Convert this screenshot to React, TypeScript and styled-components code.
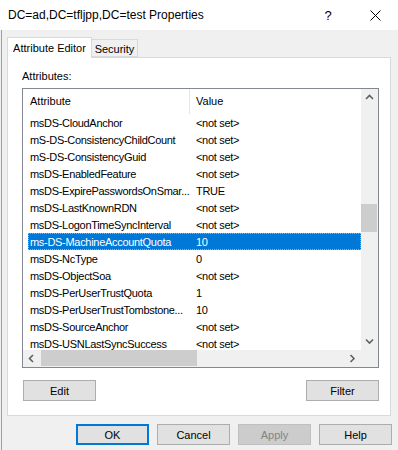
import styled, { createGlobalStyle } from "styled-components";

const GlobalStyle = createGlobalStyle`
  html, body {
    margin: 0;
    padding: 0;
    background: #f0f0f0;
  }
  * {
    box-sizing: border-box;
  }
`;

const Window = styled.div`
  width: 398px;
  height: 450px;
  display: flex;
  flex-direction: column;
  background: #f0f0f0;
  font-family: "Liberation Sans", Arial, sans-serif;
  font-size: 11px;
  color: #000;
  overflow: hidden;
`;

const TitleBar = styled.div`
  height: 30px;
  flex: none;
  display: flex;
  align-items: center;
  background: #fff;
  padding-left: 8px;
`;

const Title = styled.span`
  font-size: 12px;
  flex: 1;
`;

const HelpGlyph = styled.span`
  width: 44px;
  text-align: center;
  font-size: 13px;
  margin-right: 2px;
`;

const CloseButton = styled.span`
  width: 46px;
  height: 30px;
  display: flex;
  align-items: center;
  justify-content: center;
`;

const Body = styled.div`
  flex: 1;
  margin-left: 1px;
  border-left: 1px solid #a0a0a0;
  padding: 7px 7px 0 5px;
  display: flex;
  flex-direction: column;
`;

const TabStrip = styled.div`
  display: flex;
  align-items: flex-end;
  height: 20px;
  position: relative;
  z-index: 1;
`;

const Tab = styled.div<{ $active?: boolean }>`
  height: ${(p) => (p.$active ? "21px" : "18px")};
  width: ${(p) => (p.$active ? "85px" : "46px")};
  margin-bottom: ${(p) => (p.$active ? "-1px" : "0")};
  background: ${(p) => (p.$active ? "#fff" : "#f0f0f0")};
  border: 1px solid #d9d9d9;
  border-bottom: ${(p) => (p.$active ? "none" : "1px solid #d9d9d9")};
  border-left: ${(p) => (p.$active ? "1px solid #d9d9d9" : "none")};
  display: flex;
  align-items: center;
  justify-content: center;
  padding-top: ${(p) => (p.$active ? "0" : "1px")};
  padding-bottom: ${(p) => (p.$active ? "1px" : "0")};
`;

const Panel = styled.div`
  width: 384px;
  height: 359px;
  background: #fff;
  border: 1px solid #d9d9d9;
  padding: 12px 11px 0 14px;
  display: flex;
  flex-direction: column;
`;

const Label = styled.div`
  height: 13px;
  line-height: 13px;
  margin-bottom: 5px;
`;

const ListBox = styled.div`
  width: 357px;
  height: 280px;
  border: 1px solid #828790;
  display: grid;
  grid-template-columns: 338px 17px;
  grid-template-rows: 261px 17px;
`;

const ListContent = styled.div`
  overflow: hidden;
  background: #fff;
`;

const HeaderRow = styled.div`
  height: 25px;
  display: flex;
  padding-left: 5px;
`;

const HeaderCell = styled.div<{ $first?: boolean }>`
  width: ${(p) => (p.$first ? "162px" : "auto")};
  padding-left: ${(p) => (p.$first ? "2px" : "6px")};
  border-right: ${(p) => (p.$first ? "1px solid #e5e5e5" : "none")};
  display: flex;
  align-items: center;
  padding-bottom: 1px;
`;

const Row = styled.div<{ $selected?: boolean }>`
  height: 17px;
  margin-left: 5px;
  display: grid;
  grid-template-columns: 162px 1fr;
  align-items: center;
  background: ${(p) => (p.$selected ? "#0078d7" : "transparent")};
  color: ${(p) => (p.$selected ? "#fff" : "#000")};
  border: 1px dotted ${(p) => (p.$selected ? "#f5a040" : "transparent")};
`;

const Cell = styled.span<{ $value?: boolean }>`
  padding-left: ${(p) => (p.$value ? "5px" : "1px")};
  white-space: nowrap;
  overflow: hidden;
  letter-spacing: -0.3px;
`;

const VScroll = styled.div`
  background: #f0f0f0;
  display: flex;
  flex-direction: column;
`;

const HScroll = styled.div`
  background: #f0f0f0;
  display: flex;
  align-items: stretch;
`;

const ArrowButton = styled.div`
  width: 17px;
  height: 17px;
  flex: none;
  display: flex;
  align-items: center;
  justify-content: center;
`;

const VThumb = styled.div<{ $offset: number }>`
  height: 28px;
  margin: ${(p) => p.$offset}px 1px 0 0;
  background: #cdcdcd;
`;

const HThumb = styled.div<{ $offset: number }>`
  width: 156px;
  margin-left: ${(p) => p.$offset}px;
  margin-bottom: 1px;
  background: #cdcdcd;
`;

const Track = styled.div`
  flex: 1;
  display: flex;
  flex-direction: inherit;
`;

const Corner = styled.div`
  background: #f0f0f0;
`;

const ButtonRow = styled.div`
  margin-top: 12px;
  display: flex;
  justify-content: space-between;
  padding-left: 1px;
`;

const Button = styled.button<{ $default?: boolean }>`
  width: 73px;
  height: 21px;
  padding: 0;
  font-family: "Liberation Sans", Arial, sans-serif;
  font-size: 11px;
  color: #000;
  background: #e1e1e1;
  border: ${(p) => (p.$default ? "2px solid #0078d7" : "1px solid #adadad")};
  &:disabled {
    background: #cccccc;
    border-color: #bfbfbf;
    color: #838383;
  }
`;

const Footer = styled.div`
  margin-top: 8px;
  display: flex;
  justify-content: flex-end;
  gap: 8px;
  padding-right: 6px;
  margin-right: -7px;
`;

const Chevron = ({ dir }: { dir: "up" | "down" | "left" | "right" }) => {
  const pts = {
    up: "1,5 4.5,1.5 8,5",
    down: "1,1.5 4.5,5 8,1.5",
    left: "5,1 1.5,4.5 5,8",
    right: "1.5,1 5,4.5 1.5,8",
  }[dir];
  const vertical = dir === "up" || dir === "down";
  return (
    <svg width={vertical ? 9 : 7} height={vertical ? 7 : 9} viewBox={vertical ? "0 0 9 7" : "0 0 7 9"}>
      <polyline points={pts} fill="none" stroke="#606060" strokeWidth="1.6" />
    </svg>
  );
};

const rows: [string, string][] = [
  ["msDS-CloudAnchor", "<not set>"],
  ["mS-DS-ConsistencyChildCount", "<not set>"],
  ["mS-DS-ConsistencyGuid", "<not set>"],
  ["msDS-EnabledFeature", "<not set>"],
  ["msDS-ExpirePasswordsOnSmar...", "TRUE"],
  ["msDS-LastKnownRDN", "<not set>"],
  ["msDS-LogonTimeSyncInterval", "<not set>"],
  ["ms-DS-MachineAccountQuota", "10"],
  ["msDS-NcType", "0"],
  ["msDS-ObjectSoa", "<not set>"],
  ["msDS-PerUserTrustQuota", "1"],
  ["msDS-PerUserTrustTombstone...", "10"],
  ["msDS-SourceAnchor", "<not set>"],
  ["msDS-USNLastSyncSuccess", "<not set>"],
];

const SELECTED = 7;

export default function App() {
  return (
    <>
      <GlobalStyle />
      <Window>
        <TitleBar>
          <Title>DC=ad,DC=tfljpp,DC=test Properties</Title>
          <HelpGlyph>?</HelpGlyph>
          <CloseButton>
            <svg width="11" height="11" viewBox="0 0 11 11">
              <path d="M0.5 0.5 L10.5 10.5 M10.5 0.5 L0.5 10.5" stroke="#000" strokeWidth="1" />
            </svg>
          </CloseButton>
        </TitleBar>
        <Body>
          <TabStrip>
            <Tab $active>Attribute Editor</Tab>
            <Tab>Security</Tab>
          </TabStrip>
          <Panel>
            <Label>Attributes:</Label>
            <ListBox>
              <ListContent>
                <HeaderRow>
                  <HeaderCell $first>Attribute</HeaderCell>
                  <HeaderCell>Value</HeaderCell>
                </HeaderRow>
                {rows.map(([name, value], i) => (
                  <Row key={name} $selected={i === SELECTED}>
                    <Cell>{name}</Cell>
                    <Cell $value>{value}</Cell>
                  </Row>
                ))}
              </ListContent>
              <VScroll>
                <ArrowButton>
                  <Chevron dir="up" />
                </ArrowButton>
                <Track>
                  <VThumb $offset={98} />
                </Track>
                <ArrowButton>
                  <Chevron dir="down" />
                </ArrowButton>
              </VScroll>
              <HScroll>
                <ArrowButton>
                  <Chevron dir="left" />
                </ArrowButton>
                <Track>
                  <HThumb $offset={1} />
                </Track>
                <ArrowButton>
                  <Chevron dir="right" />
                </ArrowButton>
              </HScroll>
              <Corner />
            </ListBox>
            <ButtonRow>
              <Button>Edit</Button>
              <Button>Filter</Button>
            </ButtonRow>
          </Panel>
          <Footer>
            <Button $default>OK</Button>
            <Button>Cancel</Button>
            <Button disabled>Apply</Button>
            <Button>Help</Button>
          </Footer>
        </Body>
      </Window>
    </>
  );
}
